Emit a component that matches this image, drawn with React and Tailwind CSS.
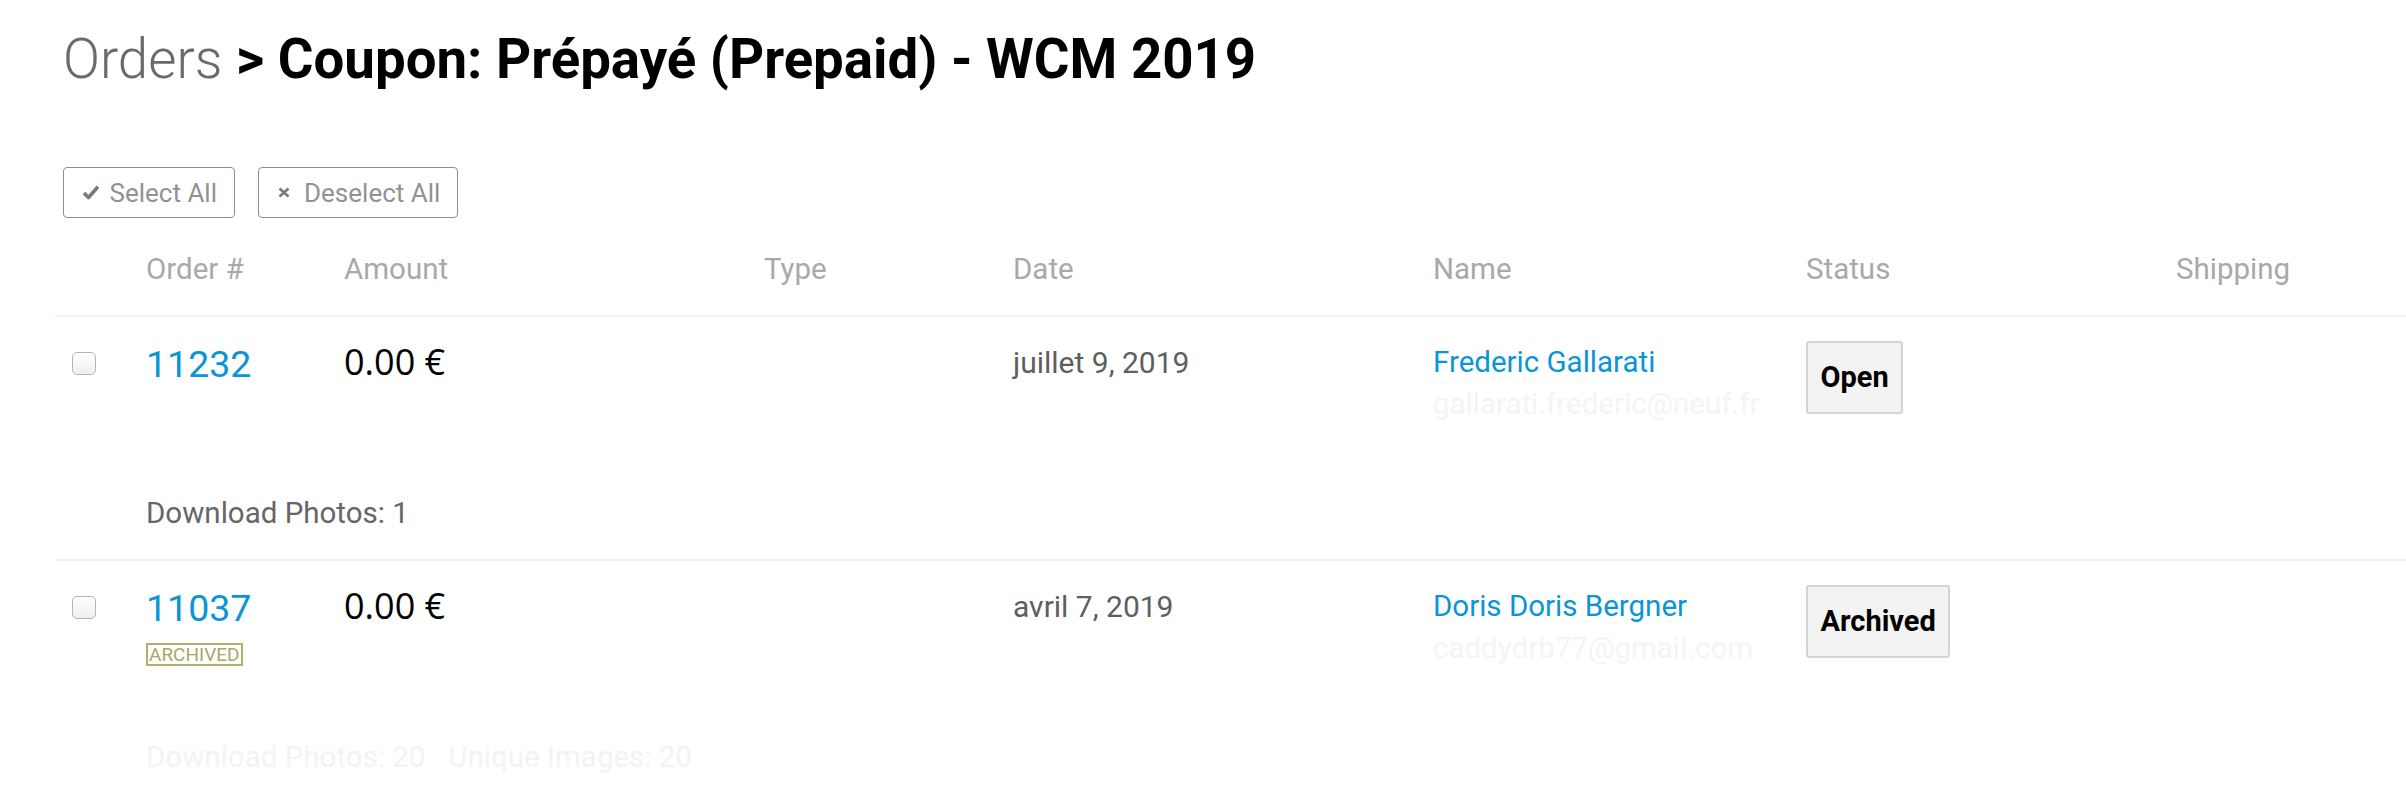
export default function App() {
  const cols =
    "grid grid-cols-[91px_198px_420px_249px_420px_373px_370px_1fr]";
  return (
    <div className="min-h-screen w-full bg-white font-['Roboto',sans-serif] overflow-hidden">
      <div className="pl-[63px] pt-[28px]">
        <h1 className="text-[54.6px] leading-[63px] text-black whitespace-nowrap">
          <span className="font-light text-[#6a6a6a]">Orders</span>
          <span className="font-bold"> &gt; Coupon: Prépayé (Prepaid) - WCM 2019</span>
        </h1>
        <div className="mt-[76px] flex gap-[23px]">
          <button className="h-[51px] flex items-center gap-[10px] pl-[17.5px] pr-[16.5px] border-[1.5px] border-[#8e8e8e] rounded-[4px] text-[26px] leading-none text-[#929292] bg-white">
            <svg width="18" height="15" viewBox="0 0 18 15" className="shrink-0">
              <path d="M2 8 L6.5 12.5 L16 1.8" fill="none" stroke="#7a7a7a" strokeWidth="3.6" strokeLinejoin="round" />
            </svg>
            <span>Select All</span>
          </button>
          <button className="h-[51px] flex items-center gap-[14px] pl-[19.5px] pr-[16.5px] border-[1.5px] border-[#8e8e8e] rounded-[4px] text-[26px] leading-none text-[#929292] bg-white">
            <svg width="12" height="11" viewBox="0 0 12 11" className="shrink-0">
              <path d="M1.5 1.5 L10.5 9.5 M10.5 1.5 L1.5 9.5" fill="none" stroke="#7a7a7a" strokeWidth="2.6" />
            </svg>
            <span>Deselect All</span>
          </button>
        </div>
      </div>

      <div className="ml-[55px] mt-[33.7px]">
        {/* header */}
        <div className={`${cols} text-[29.5px] leading-[34.5px] text-[#a9a9a9] pb-[28.8px] border-b-2 border-[#f2f2f2]`}>
          <div />
          <div>Order #</div>
          <div>Amount</div>
          <div>Type</div>
          <div>Date</div>
          <div>Name</div>
          <div>Status</div>
          <div>Shipping</div>
        </div>

        {/* row 1 */}
        <div className="pt-[24px] pb-[28.5px] border-b-2 border-[#f2f2f2]">
          <div className={`${cols} h-[155px]`}>
            <div className="pl-[17px] pt-[11px]">
              <span className="block w-[24px] h-[23px] rounded-[5px] border-[1.5px] border-[#b5b5b5] bg-gradient-to-b from-white to-[#eeeeee]" />
            </div>
            <div className="mt-[2px]">
              <div className="text-[37.5px] leading-[42px] text-[#0a95d6]">11232</div>
            </div>
            <div className="font-['Open_Sans',sans-serif] text-[36px] leading-[42px] text-black">0.00 €</div>
            <div />
            <div className="mt-[4px] text-[30px] leading-[35px] text-[#5e5e5e]">juillet 9, 2019</div>
            <div>
              <div className="text-[29.5px] leading-[42px] text-[#0a95d6]">Frederic Gallarati</div>
              <div className="text-[29.5px] leading-[42px] text-[#f4f4f4]">gallarati.frederic@neuf.fr</div>
            </div>
            <div>
              <span className="inline-flex h-[73px] items-center px-[12.5px] border-2 border-[#d4d4d4] rounded-[3px] bg-[#f3f3f3] text-[29px] font-bold text-black">Open</span>
            </div>
            <div />
          </div>
          <div className="pl-[91px] text-[29.5px] leading-[34.5px] text-[#666666]">Download Photos: 1</div>
        </div>

        {/* row 2 */}
        <div className="pt-[24px] pb-[28.5px]">
          <div className={`${cols} h-[155px]`}>
            <div className="pl-[17px] pt-[11px]">
              <span className="block w-[24px] h-[23px] rounded-[5px] border-[1.5px] border-[#b5b5b5] bg-gradient-to-b from-white to-[#eeeeee]" />
            </div>
            <div className="mt-[2px]">
              <div className="text-[37.5px] leading-[42px] text-[#0a95d6]">11037</div>
              <span className="mt-[14px] inline-block border-2 border-[#b0b06c] px-[1px] text-[19px] leading-[19px] text-[#a8a866]">ARCHIVED</span>
            </div>
            <div className="font-['Open_Sans',sans-serif] text-[36px] leading-[42px] text-black">0.00 €</div>
            <div />
            <div className="mt-[4px] text-[30px] leading-[35px] text-[#5e5e5e]">avril 7, 2019</div>
            <div>
              <div className="text-[29.5px] leading-[42px] text-[#0a95d6]">Doris Doris Bergner</div>
              <div className="text-[29.5px] leading-[42px] text-[#f4f4f4]">caddydrb77@gmail.com</div>
            </div>
            <div>
              <span className="inline-flex h-[73px] items-center px-[12.5px] border-2 border-[#d4d4d4] rounded-[3px] bg-[#f3f3f3] text-[29px] font-bold text-black">Archived</span>
            </div>
            <div />
          </div>
          <div className="pl-[91px] flex gap-[23px] text-[29.5px] leading-[34.5px] text-[#f3f3f3]">
            <span>Download Photos: 20</span>
            <span>Unique Images: 20</span>
          </div>
        </div>
      </div>
    </div>
  );
}
